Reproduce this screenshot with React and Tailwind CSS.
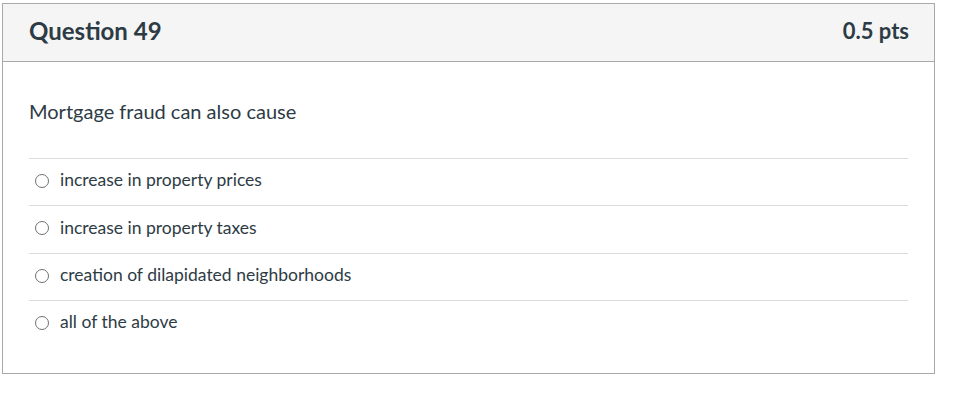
import React from 'react'

const options = [
  { label: 'increase in property prices', h: 'h-[47px]' },
  { label: 'increase in property taxes', h: 'h-[48px]' },
  { label: 'creation of dilapidated neighborhoods', h: 'h-[47px]' },
  { label: 'all of the above', h: 'h-[47px]' },
]

function Option({ label, h }) {
  return (
    <label className={`flex items-center ${h} border-t border-[#dcdcdc] pl-[6px] pb-[4px]`}>
      <span className="w-[14px] h-[14px] rounded-full border border-[#707070] bg-white shrink-0 mt-[1px]" />
      <span className="ml-[11px] text-[17.5px] leading-[24px] text-[#2d3b45]">{label}</span>
    </label>
  )
}

export default function App() {
  return (
    <div className="bg-white w-[966px] h-[405px] pt-[3px] pl-[2px]" style={{ fontFamily: 'Lato, "Open Sans", sans-serif' }}>
      <div className="w-[933px] border border-[#a9a9a9] bg-white">
        {/* Header */}
        <div className="h-[58px] bg-[#f5f5f5] border-b border-[#a9a9a9] flex items-center justify-between pl-[26px] pr-[25px] pb-[4px]">
          <h2 className="text-[24px] leading-[30px] font-bold text-[#2d3b45]">Question 49</h2>
          <div className="text-[22px] leading-[30px] font-bold text-[#2d3b45]">0.5 pts</div>
        </div>

        {/* Body */}
        <div className="px-[26px] pt-[36px] pb-[26px]">
          <p className="text-[20px] text-[#2d3b45] leading-[27px] mb-[33px]">Mortgage fraud can also cause</p>
          <div>
            {options.map(o => (
              <Option key={o.label} label={o.label} h={o.h} />
            ))}
          </div>
        </div>
      </div>
    </div>
  )
}
